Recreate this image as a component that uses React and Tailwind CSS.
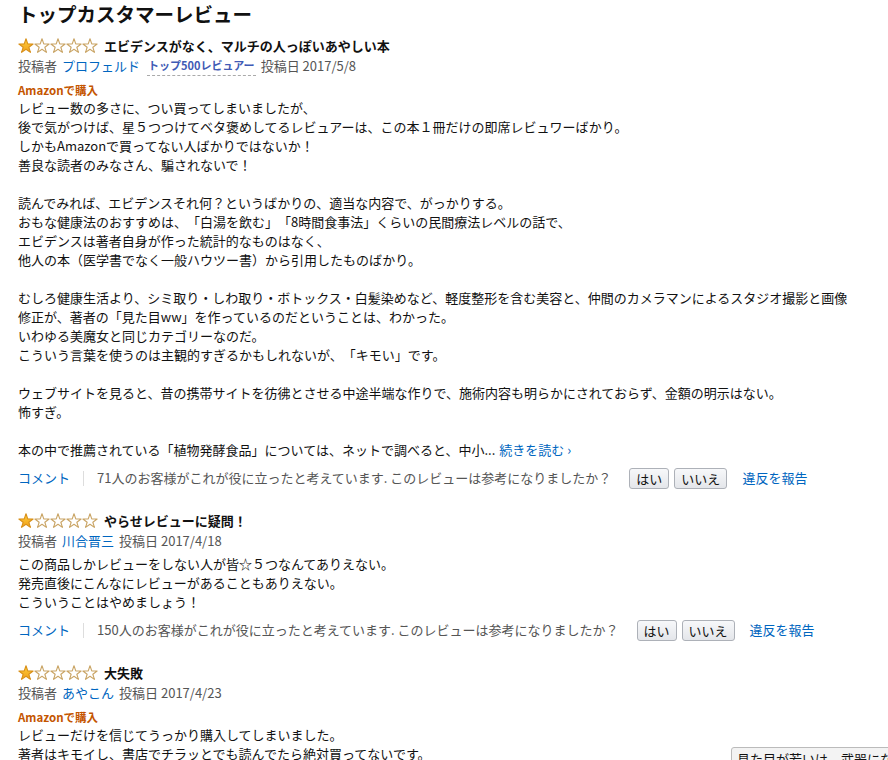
import React from "react";

// One filled star followed by four outlined ones
const STAR =
  "8,0.8 9.76,5.87 15.13,5.98 10.85,9.23 12.41,14.37 8,11.3 3.59,14.37 5.15,9.23 0.87,5.98 6.24,5.87";

function Stars() {
  return (
    <svg width="80" height="16" viewBox="0 0 80 16" className="shrink-0">
      <defs>
        <linearGradient id="gold" x1="0" y1="0" x2="0" y2="1">
          <stop offset="0" stopColor="#ffce3d" />
          <stop offset="1" stopColor="#f0a01a" />
        </linearGradient>
      </defs>
      {[0, 1, 2, 3, 4].map((i) => (
        <polygon
          key={i}
          points={STAR}
          transform={`translate(${i * 16} 0)`}
          fill={i === 0 ? "url(#gold)" : "#fff"}
          stroke={i === 0 ? "#d8901a" : "#c9a464"}
          strokeWidth="1.1"
          strokeLinejoin="round"
        />
      ))}
    </svg>
  );
}

function Body({ lines, more }) {
  return (
    <div className="text-[13px] leading-[19px] text-[#111]">
      {lines.map((line, i) =>
        line === "" ? (
          <div key={i} className="h-[19px]" />
        ) : (
          <div key={i} className="whitespace-nowrap">
            {line}
            {more && i === lines.length - 1 && (
              <a className="text-[#0066c0] ml-[4px]">続きを読む ›</a>
            )}
          </div>
        )
      )}
    </div>
  );
}

function CommentRow({ count }) {
  return (
    <div className="flex items-center h-[22px] text-[13px] whitespace-nowrap">
      <a className="text-[#0066c0]">コメント</a>
      <span className="mx-[13px] h-[15px] w-px bg-[#ddd]" />
      <span className="text-[#555]">
        {count}人のお客様がこれが役に立ったと考えています. このレビューは参考になりましたか？
      </span>
      <button className="ml-[18px] h-[21px] px-[6px] text-[13px] text-[#111] leading-[19px] rounded-[3px] border border-[#adb1b8] bg-gradient-to-b from-[#f7f8fa] to-[#e4e6ea]">
        はい
      </button>
      <button className="ml-[5px] h-[21px] px-[6px] text-[13px] text-[#111] leading-[19px] rounded-[3px] border border-[#adb1b8] bg-gradient-to-b from-[#f7f8fa] to-[#e4e6ea]">
        いいえ
      </button>
      <a className="ml-[15px] text-[#0066c0]">違反を報告</a>
    </div>
  );
}

function Review({ title, author, date, badge, verified, lines, more, count }) {
  return (
    <div>
      <div className="flex items-center h-[20px] gap-[6px]">
        <Stars />
        <span className="text-[13px] font-bold text-[#111]">{title}</span>
      </div>
      <div className="flex items-center h-[19px] text-[13px] text-[#555] whitespace-nowrap">
        <span>投稿者</span>
        <a className="ml-[5px] text-[#0066c0]">{author}</a>
        {badge && (
          <span className="ml-[7px] h-[20px] pt-[1px] px-[1px] text-[11px] font-bold text-[#3f5bb5] border-b border-dashed border-[#aaa] leading-[17px]">
            {badge}
          </span>
        )}
        <span className="ml-[5px]">投稿日 {date}</span>
      </div>
      {verified ? (
        <div className="mt-[7px] h-[16px] text-[11.5px] leading-[16px] font-bold text-[#c45500]">
          Amazonで購入
        </div>
      ) : (
        <div className="h-[4px]" />
      )}
      <Body lines={lines} more={more} />
      {count && (
        <div className="mt-[8px]">
          <CommentRow count={count} />
        </div>
      )}
    </div>
  );
}

const review1 = [
  "レビュー数の多さに、つい買ってしまいましたが、",
  "後で気がつけば、星５つつけてベタ褒めしてるレビュアーは、この本１冊だけの即席レビュワーばかり。",
  "しかもAmazonで買ってない人ばかりではないか！",
  "善良な読者のみなさん、騙されないで！",
  "",
  "読んでみれば、エビデンスそれ何？というばかりの、適当な内容で、がっかりする。",
  "おもな健康法のおすすめは、「白湯を飲む」「8時間食事法」くらいの民間療法レベルの話で、",
  "エビデンスは著者自身が作った統計的なものはなく、",
  "他人の本（医学書でなく一般ハウツー書）から引用したものばかり。",
  "",
  "むしろ健康生活より、シミ取り・しわ取り・ボトックス・白髪染めなど、軽度整形を含む美容と、仲間のカメラマンによるスタジオ撮影と画像",
  "修正が、著者の「見た目ww」を作っているのだということは、わかった。",
  "いわゆる美魔女と同じカテゴリーなのだ。",
  "こういう言葉を使うのは主観的すぎるかもしれないが、「キモい」です。",
  "",
  "ウェブサイトを見ると、昔の携帯サイトを彷彿とさせる中途半端な作りで、施術内容も明らかにされておらず、金額の明示はない。",
  "怖すぎ。",
  "",
  "本の中で推薦されている「植物発酵食品」については、ネットで調べると、中小...",
];

const review2 = [
  "この商品しかレビューをしない人が皆☆５つなんてありえない。",
  "発売直後にこんなにレビューがあることもありえない。",
  "こういうことはやめましょう！",
];

const review3 = [
  "レビューだけを信じてうっかり購入してしまいました。",
  "著者はキモイし、書店でチラッとでも読んでたら絶対買ってないです。",
  "内容も薄く、がっかりしました。",
];

export default function App() {
  return (
    <div
      className="relative w-[888px] h-[760px] overflow-hidden bg-white pl-[18px] [text-spacing-trim:space-all]"
      style={{ fontFamily: '"Noto Sans CJK JP", "Noto Sans", sans-serif' }}
    >
      <h3 className="h-[28px] text-[19.5px] leading-[28px] font-bold text-[#111]">
        トップカスタマーレビュー
      </h3>
      <div className="mt-[8px] flex flex-col gap-[22px]">
        <Review
          title="エビデンスがなく、マルチの人っぽいあやしい本"
          author="プロフェルド"
          badge="トップ500レビュアー"
          date="2017/5/8"
          verified
          lines={review1}
          more
          count="71"
        />
        <Review
          title="やらせレビューに疑問！"
          author="川合晋三"
          date="2017/4/18"
          lines={review2}
          count="150"
        />
        <Review
          title="大失敗"
          author="あやこん"
          date="2017/4/23"
          verified
          lines={review3}
        />
      </div>
      {/* next-review link box peeking in at the bottom edge */}
      <div className="absolute left-[731px] top-[747px] h-[24px] pl-[5px] pr-[10px] whitespace-nowrap text-[13px] leading-[22px] text-[#111] bg-[#f3f3f3] border border-[#bbb] rounded-[3px]">
        見た目が若いは、武器になる。
      </div>
    </div>
  );
}
